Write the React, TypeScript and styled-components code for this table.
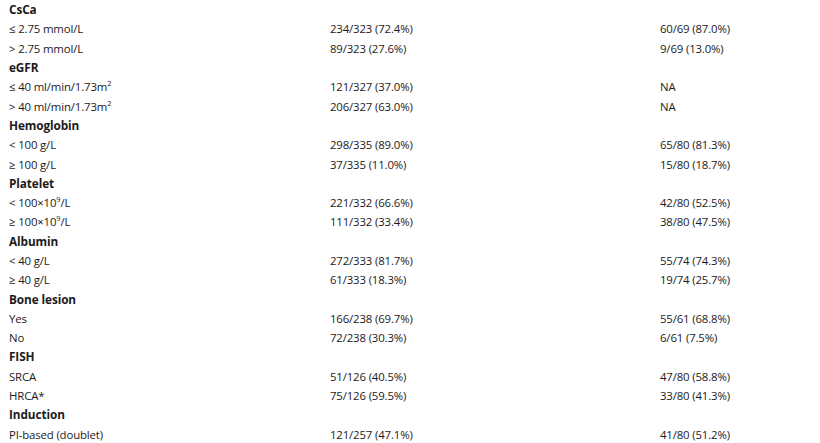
import styled, { createGlobalStyle } from "styled-components";

const GlobalStyle = createGlobalStyle`
  html, body {
    margin: 0;
    padding: 0;
    background: #ffffff;
  }
  body {
    font-family: "Open Sans", "Liberation Sans", sans-serif;
    color: #1d1a1b;
  }
`;

const Table = styled.div`
  width: 820px;
  padding: 0 0 0 9px;
  box-sizing: border-box;
`;

const Row = styled.div`
  display: grid;
  grid-template-columns: 321px 330px 1fr;
  height: 19.3px;
  align-items: center;
  font-size: 11.4px;
  line-height: 19px;
  white-space: nowrap;
`;

const Heading = styled.div`
  font-weight: 700;
  font-size: 11.8px;
  letter-spacing: -0.1px;
`;

const Cell = styled.div`
  letter-spacing: -0.15px;
`;

const Sup = styled.sup`
  font-size: 7.5px;
  line-height: 0;
`;

type Item = { label: React.ReactNode; a: string; b: string };
type Group = { title: string; items: Item[] };

const groups: Group[] = [
  {
    title: "CsCa",
    items: [
      { label: "≤ 2.75 mmol/L", a: "234/323 (72.4%)", b: "60/69 (87.0%)" },
      { label: "> 2.75 mmol/L", a: "89/323 (27.6%)", b: "9/69 (13.0%)" },
    ],
  },
  {
    title: "eGFR",
    items: [
      {
        label: (
          <>
            ≤ 40 ml/min/1.73m<Sup>2</Sup>
          </>
        ),
        a: "121/327 (37.0%)",
        b: "NA",
      },
      {
        label: (
          <>
            &gt; 40 ml/min/1.73m<Sup>2</Sup>
          </>
        ),
        a: "206/327 (63.0%)",
        b: "NA",
      },
    ],
  },
  {
    title: "Hemoglobin",
    items: [
      { label: "< 100 g/L", a: "298/335 (89.0%)", b: "65/80 (81.3%)" },
      { label: "≥ 100 g/L", a: "37/335 (11.0%)", b: "15/80 (18.7%)" },
    ],
  },
  {
    title: "Platelet",
    items: [
      {
        label: (
          <>
            &lt; 100×10<Sup>9</Sup>/L
          </>
        ),
        a: "221/332 (66.6%)",
        b: "42/80 (52.5%)",
      },
      {
        label: (
          <>
            ≥ 100×10<Sup>9</Sup>/L
          </>
        ),
        a: "111/332 (33.4%)",
        b: "38/80 (47.5%)",
      },
    ],
  },
  {
    title: "Albumin",
    items: [
      { label: "< 40 g/L", a: "272/333 (81.7%)", b: "55/74 (74.3%)" },
      { label: "≥ 40 g/L", a: "61/333 (18.3%)", b: "19/74 (25.7%)" },
    ],
  },
  {
    title: "Bone lesion",
    items: [
      { label: "Yes", a: "166/238 (69.7%)", b: "55/61 (68.8%)" },
      { label: "No", a: "72/238 (30.3%)", b: "6/61 (7.5%)" },
    ],
  },
  {
    title: "FISH",
    items: [
      { label: "SRCA", a: "51/126 (40.5%)", b: "47/80 (58.8%)" },
      { label: "HRCA*", a: "75/126 (59.5%)", b: "33/80 (41.3%)" },
    ],
  },
  {
    title: "Induction",
    items: [
      { label: "PI-based (doublet)", a: "121/257 (47.1%)", b: "41/80 (51.2%)" },
    ],
  },
];

export default function App() {
  return (
    <>
      <GlobalStyle />
      <Table>
        {groups.map((g) => (
          <div key={g.title}>
            <Row>
              <Heading>{g.title}</Heading>
              <Cell />
              <Cell />
            </Row>
            {g.items.map((it, i) => (
              <Row key={i}>
                <Cell>{it.label}</Cell>
                <Cell>{it.a}</Cell>
                <Cell>{it.b}</Cell>
              </Row>
            ))}
          </div>
        ))}
      </Table>
    </>
  );
}
